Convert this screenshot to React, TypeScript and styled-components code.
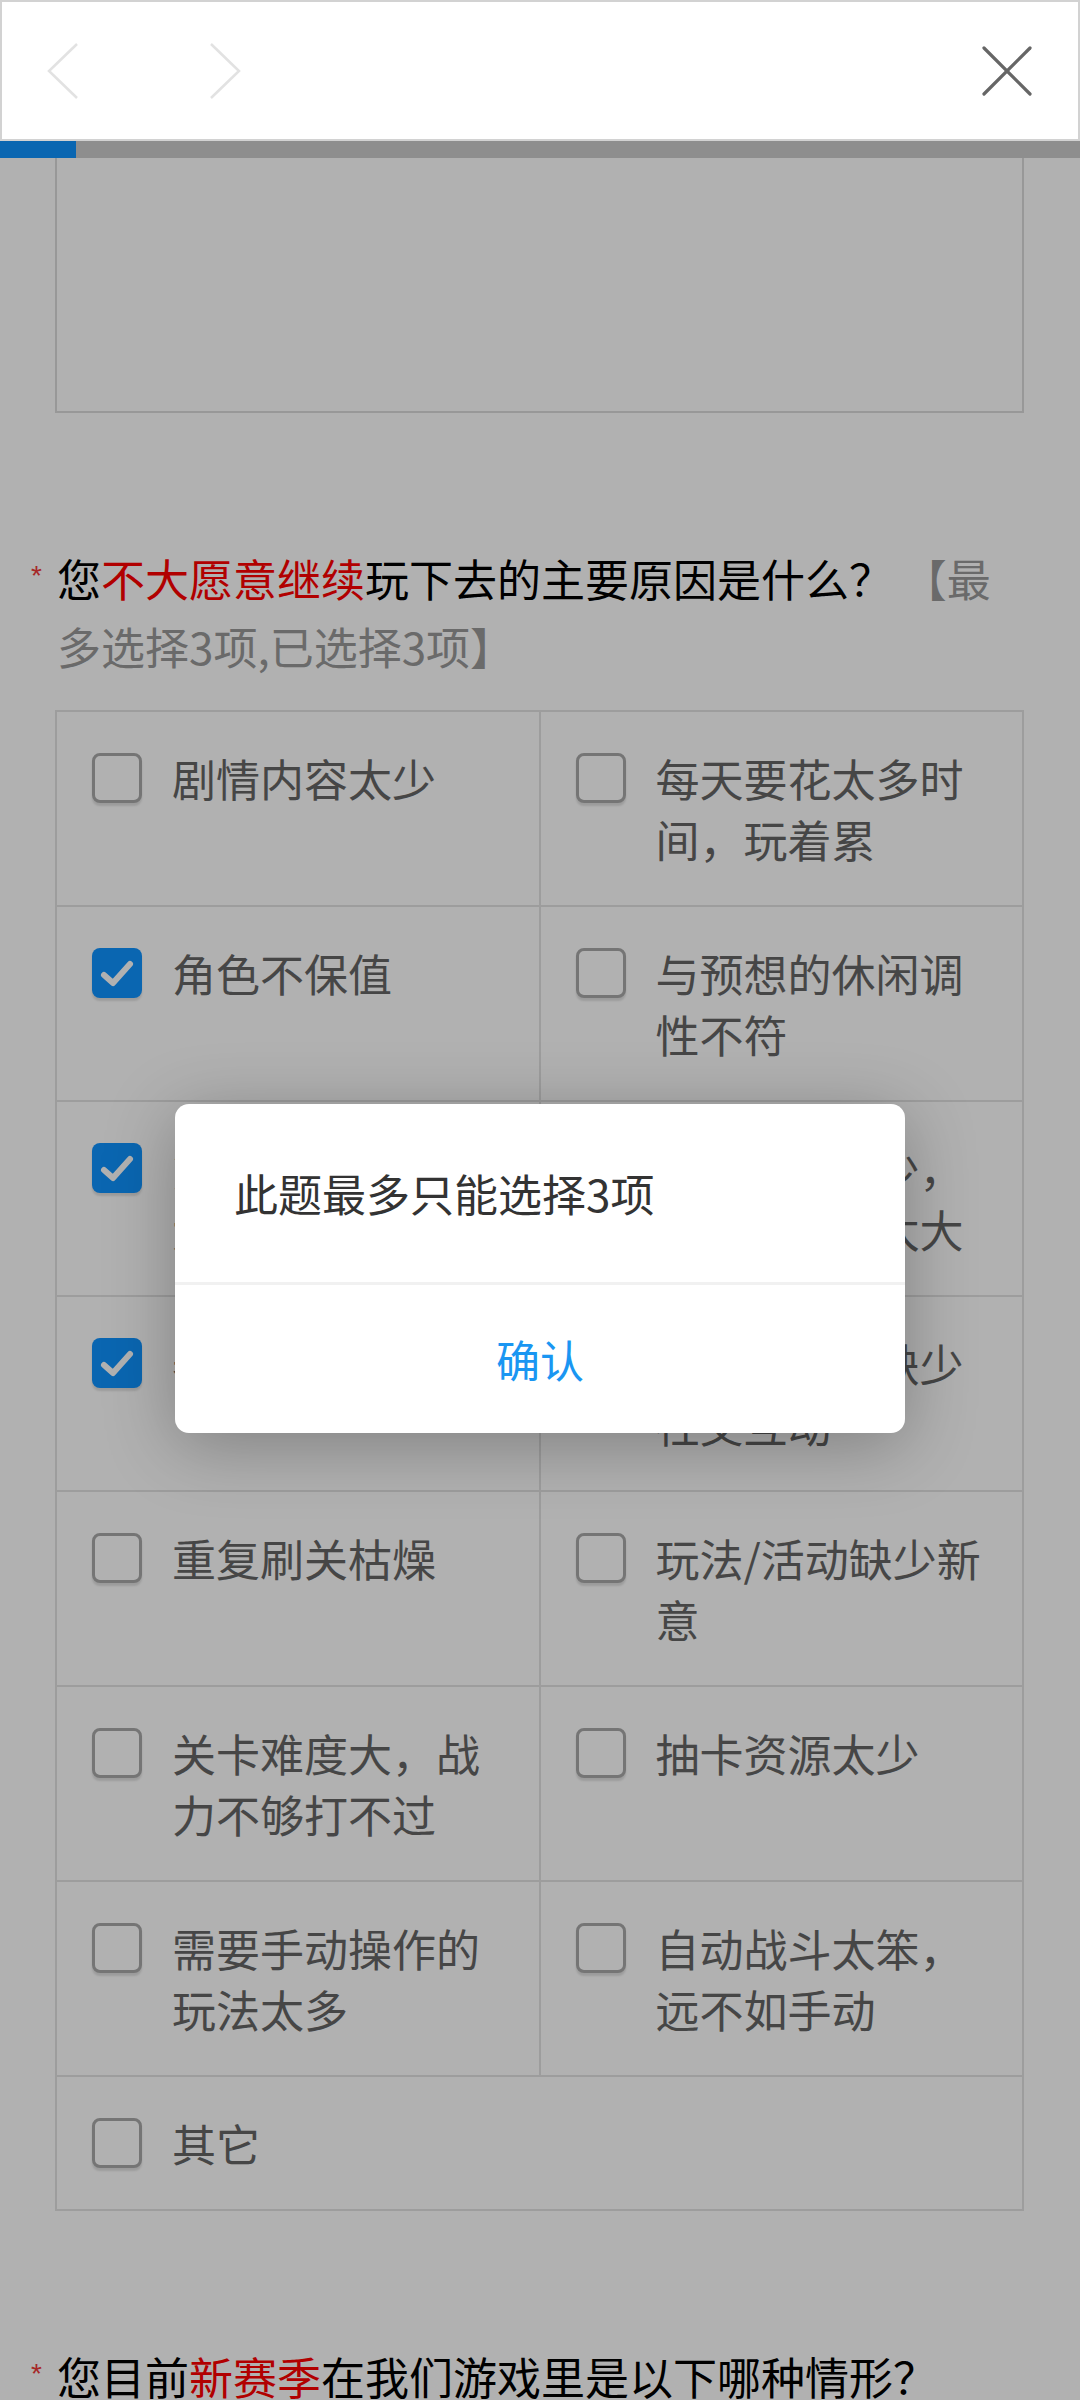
import React from "react";
import styled, { createGlobalStyle } from "styled-components";

const GlobalStyle = createGlobalStyle`
  html, body {
    margin: 0;
    padding: 0;
    background: #ffffff;
  }
  body {
    font-family: "Noto Sans CJK SC", "Noto Sans", sans-serif;
    -webkit-font-smoothing: antialiased;
  }
  * {
    box-sizing: border-box;
  }
`;

type Option = { label: string; checked?: boolean; full?: boolean };

const options: Option[] = [
  { label: "剧情内容太少" },
  { label: "每天要花太多时间，玩着累" },
  { label: "角色不保值", checked: true },
  { label: "与预想的休闲调性不符" },
  { label: "氪金付费压力太大", checked: true },
  { label: "福利奖励太少，资源需求量太大" },
  { label: "养成周期太长", checked: true },
  { label: "与其他玩家缺少社交互动" },
  { label: "重复刷关枯燥" },
  { label: "玩法/活动缺少新意" },
  { label: "关卡难度大，战力不够打不过" },
  { label: "抽卡资源太少" },
  { label: "需要手动操作的玩法太多" },
  { label: "自动战斗太笨，远不如手动" },
  { label: "其它", full: true },
];

const App: React.FC = () => {
  return (
    <>
      <GlobalStyle />
      <Page>
        {/* top navigation */}
        <TopBar>
          <NavGroup>
            <NavButton aria-label="back">
              <svg width="34" height="58" viewBox="0 0 34 58">
                <polyline points="31,2 3,29 31,56" fill="none" stroke="#e2e2e2" strokeWidth="2.5" />
              </svg>
            </NavButton>
            <NavButton aria-label="forward">
              <svg width="34" height="58" viewBox="0 0 34 58">
                <polyline points="3,2 31,29 3,56" fill="none" stroke="#e2e2e2" strokeWidth="2.5" />
              </svg>
            </NavButton>
          </NavGroup>
          <CloseButton aria-label="close">
            <svg width="52" height="52" viewBox="0 0 52 52">
              <line x1="3" y1="3" x2="49" y2="49" stroke="#666666" strokeWidth="3.2" strokeLinecap="round" />
              <line x1="49" y1="3" x2="3" y2="49" stroke="#666666" strokeWidth="3.2" strokeLinecap="round" />
            </svg>
          </CloseButton>
        </TopBar>
        <Progress>
          <ProgressFill style={{ width: 76 }} />
        </Progress>

        <Content>
          <TextBox />

          <Question>
            <Star>*</Star>您<Red>不大愿意继续</Red>玩下去的主要原因是什么？ <Hint>【最多选择3项,已选择3项】</Hint>
          </Question>

          <OptionGrid>
            {options.map((opt) => (
              <Cell key={opt.label} $full={opt.full}>
                <Box $checked={opt.checked}>
                  {opt.checked && (
                    <svg width="50" height="50" viewBox="0 0 50 50">
                      <polyline points="12,27 21,35 38,16" fill="none" stroke="#ffffff" strokeWidth="6" strokeLinecap="round" strokeLinejoin="round" />
                    </svg>
                  )}
                </Box>
                <Label>{opt.label}</Label>
              </Cell>
            ))}
          </OptionGrid>

          <Question $gap={131}>
            <Star>*</Star>您目前<Red>新赛季</Red>在我们游戏里是以下哪种情形？
          </Question>
        </Content>

        {/* modal alert */}
        <Overlay>
          <Dialog>
            <Message>此题最多只能选择3项</Message>
            <ConfirmButton>确认</ConfirmButton>
          </Dialog>
        </Overlay>
      </Page>
    </>
  );
};

const Page = styled.div`
  position: relative;
  width: 1080px;
  height: 2400px;
  overflow: hidden;
  background: #ffffff;
`;

const TopBar = styled.header`
  position: relative;
  z-index: 20;
  height: 141px;
  display: flex;
  align-items: center;
  justify-content: space-between;
  background: #ffffff;
  border: 2px solid #d2d2d2;
  padding: 0 44px 0 44px;
`;

const NavGroup = styled.div`
  display: flex;
  align-items: center;
  gap: 128px;
`;

const NavButton = styled.div`
  display: flex;
  width: 34px;
  height: 58px;
`;

const CloseButton = styled.div`
  display: flex;
  width: 52px;
  height: 52px;
  margin-right: 1px;
`;

const Progress = styled.div`
  height: 17px;
  background: #cdcdcd;
  display: flex;
`;

const ProgressFill = styled.div`
  height: 100%;
  background: #0f93ff;
`;

const Content = styled.main`
  padding: 0 56px 0 55px;
`;

const TextBox = styled.div`
  height: 255px;
  border: 2px solid #dcdcdc;
  border-top: none;
`;

const Question = styled.div<{ $gap?: number }>`
  margin-top: ${(p) => p.$gap ?? 131}px;
  padding-left: 2px;
  font-size: 44px;
  line-height: 68px;
  color: #000000;
`;

const Star = styled.span`
  display: inline-block;
  width: 26px;
  margin-left: -26px;
  font-family: "Liberation Sans", sans-serif;
  font-size: 28px;
  color: #f03a3a;
  vertical-align: top;
  line-height: 64px;
`;

const Red = styled.span`
  color: #ff0000;
`;

const Hint = styled.span`
  color: #999999;
`;

const OptionGrid = styled.div`
  margin-top: 30px;
  display: grid;
  grid-template-columns: 1fr 1fr;
  border-top: 2px solid #e2e2e2;
  border-left: 2px solid #e2e2e2;
`;

const Cell = styled.div<{ $full?: boolean }>`
  grid-column: ${(p) => (p.$full ? "1 / span 2" : "auto")};
  display: flex;
  align-items: flex-start;
  gap: 30px;
  padding: 36px 34px 35px 35px;
  border-right: 2px solid #e2e2e2;
  border-bottom: 2px solid #e2e2e2;
`;

const Box = styled.div<{ $checked?: boolean }>`
  flex: none;
  width: 50px;
  height: 50px;
  margin-top: 5px;
  border-radius: 8px;
  background: ${(p) => (p.$checked ? "#0f93ff" : "#ffffff")};
  border: ${(p) => (p.$checked ? "none" : "3px solid #a9a9a9")};
  box-shadow: 0 3px 2px rgba(0, 0, 0, 0.12);
  display: flex;
`;

const Label = styled.div`
  font-size: 44px;
  line-height: 61px;
  color: #666666;
`;

const Overlay = styled.div`
  position: absolute;
  inset: 0;
  z-index: 10;
  background: rgba(0, 0, 0, 0.305);
  display: flex;
  justify-content: center;
  align-items: flex-start;
  padding-top: 1104px;
`;

const Dialog = styled.div`
  width: 730px;
  background: #ffffff;
  border-radius: 14px;
  overflow: hidden;
  box-shadow: 0 12px 70px rgba(0, 0, 0, 0.28);
`;

const Message = styled.div`
  height: 181px;
  display: flex;
  align-items: center;
  padding-left: 59px;
  font-size: 44px;
  color: #333333;
  border-bottom: 3px solid #f1f1f1;
`;

const ConfirmButton = styled.div`
  height: 148px;
  display: flex;
  align-items: center;
  justify-content: center;
  font-size: 44px;
  color: #1a96f2;
`;

export default App;
